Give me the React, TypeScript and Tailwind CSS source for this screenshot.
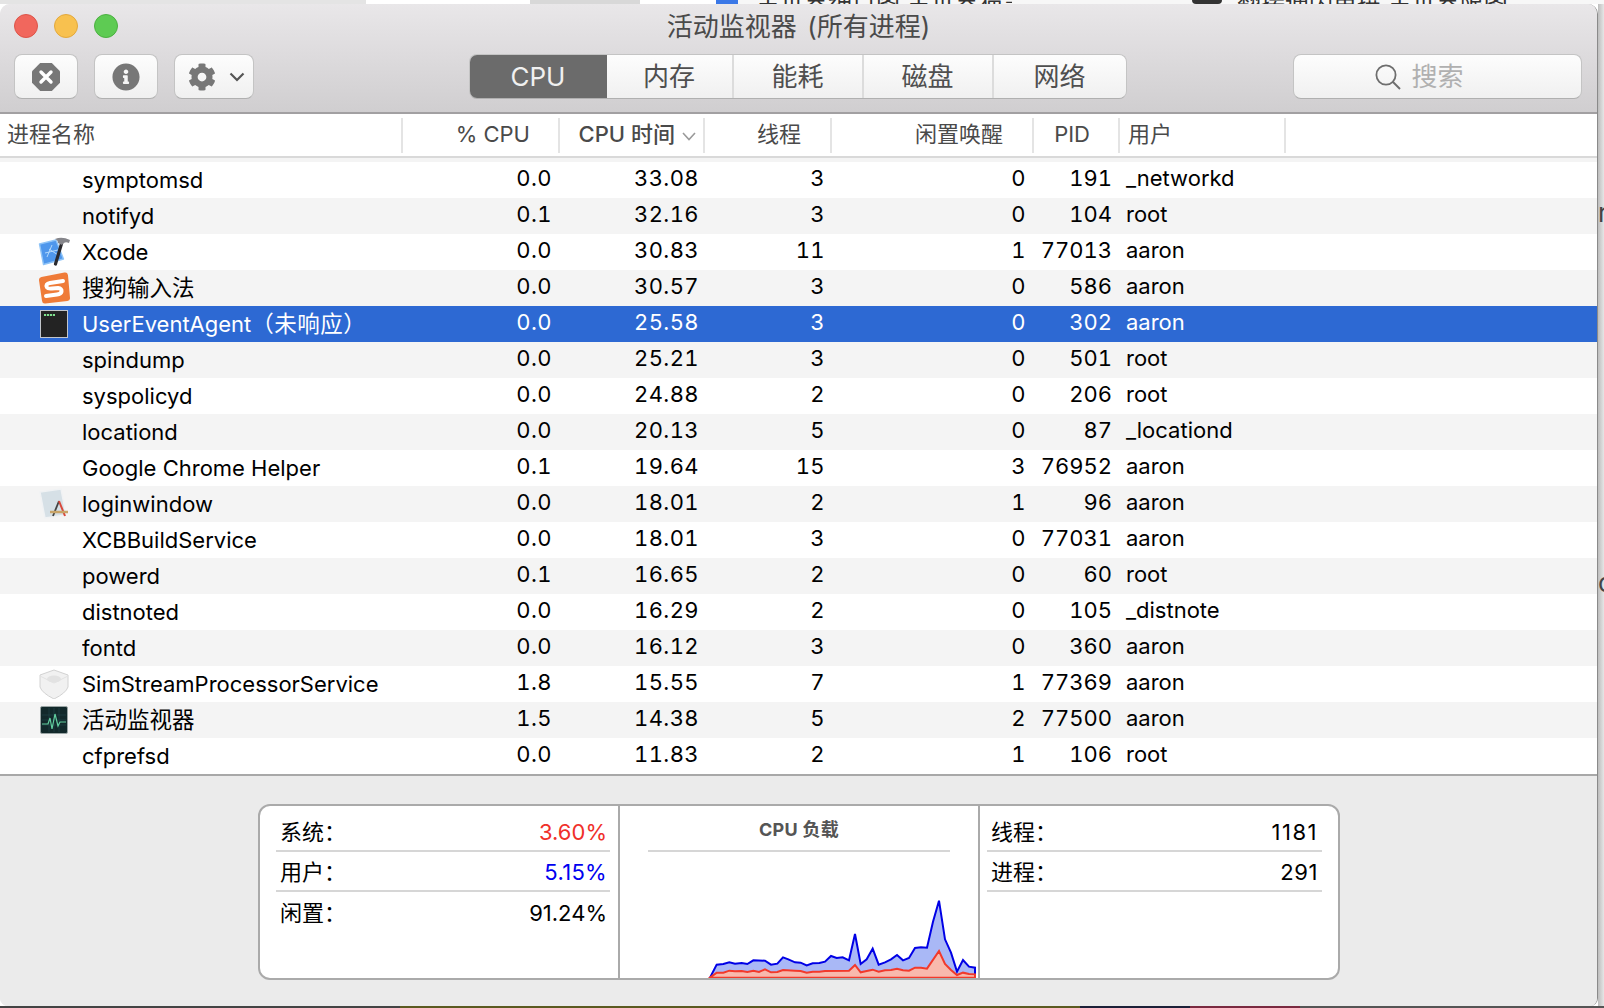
import React from "react";
import { FaCog, FaInfoCircle } from "react-icons/fa";

type Row = { name: string; cjk?: string; cpu: string; time: string; thr: string; idle: string; pid: string; user: string; icon?: string; sel?: boolean };

const rows: Row[] = [
  { name: "symptomsd", cpu: "0.0", time: "33.08", thr: "3", idle: "0", pid: "191", user: "_networkd" },
  { name: "notifyd", cpu: "0.1", time: "32.16", thr: "3", idle: "0", pid: "104", user: "root" },
  { name: "Xcode", cpu: "0.0", time: "30.83", thr: "11", idle: "1", pid: "77013", user: "aaron", icon: "xcode" },
  { name: "", cjk: "搜狗输入法", cpu: "0.0", time: "30.57", thr: "3", idle: "0", pid: "586", user: "aaron", icon: "sogou" },
  { name: "UserEventAgent", cjk: "（未响应）", cpu: "0.0", time: "25.58", thr: "3", idle: "0", pid: "302", user: "aaron", icon: "term", sel: true },
  { name: "spindump", cpu: "0.0", time: "25.21", thr: "3", idle: "0", pid: "501", user: "root" },
  { name: "syspolicyd", cpu: "0.0", time: "24.88", thr: "2", idle: "0", pid: "206", user: "root" },
  { name: "locationd", cpu: "0.0", time: "20.13", thr: "5", idle: "0", pid: "87", user: "_locationd" },
  { name: "Google Chrome Helper", cpu: "0.1", time: "19.64", thr: "15", idle: "3", pid: "76952", user: "aaron" },
  { name: "loginwindow", cpu: "0.0", time: "18.01", thr: "2", idle: "1", pid: "96", user: "aaron", icon: "login" },
  { name: "XCBBuildService", cpu: "0.0", time: "18.01", thr: "3", idle: "0", pid: "77031", user: "aaron" },
  { name: "powerd", cpu: "0.1", time: "16.65", thr: "2", idle: "0", pid: "60", user: "root" },
  { name: "distnoted", cpu: "0.0", time: "16.29", thr: "2", idle: "0", pid: "105", user: "_distnote" },
  { name: "fontd", cpu: "0.0", time: "16.12", thr: "3", idle: "0", pid: "360", user: "aaron" },
  { name: "SimStreamProcessorService", cpu: "1.8", time: "15.55", thr: "7", idle: "1", pid: "77369", user: "aaron", icon: "sim" },
  { name: "", cjk: "活动监视器", cpu: "1.5", time: "14.38", thr: "5", idle: "2", pid: "77500", user: "aaron", icon: "act" },
  { name: "cfprefsd", cpu: "0.0", time: "11.83", thr: "2", idle: "1", pid: "106", user: "root" },
];

function AppIcon({ kind }: { kind?: string }) {
  if (kind === "xcode")
    return (
      <svg viewBox="0 0 32 32" className="w-8 h-8">
        <path d="M1.5 8 L18 4 L25.5 23 L5.5 28.5 Z" fill="#4f97ec" stroke="#8fc4f7" strokeWidth="1.4" strokeLinejoin="round" />
        <path d="M9 21 L14 9 M11 13 L20 19 M7 17 L20 14" stroke="#bcdffc" strokeWidth="0.9" fill="none" />
        <path d="M24 6 L17.5 28" stroke="#2a2a2e" strokeWidth="3.2" strokeLinecap="round" />
        <path d="M17 3 Q24 0 32 4 L31 7 Q26 5 24 9 L20 7 Q20 4 17 3 Z" fill="#85858a" />
      </svg>
    );
  if (kind === "sogou")
    return (
      <svg viewBox="0 0 32 32" className="w-8 h-8">
        <path d="M4 8 L27 3.5 L29 26 L7 28.5 Z" fill="#ef7b38" stroke="#ef7b38" strokeWidth="6" strokeLinejoin="round" />
        <path d="M25 9 L12 11 Q7 12 9 15.5 Q10 17 14 16.5 L20 16 Q24 16.5 23.5 19.5 Q23 22 19 22.5 L8 24" stroke="#fff" strokeWidth="4" fill="none" strokeLinecap="round" />
      </svg>
    );
  if (kind === "term")
    return (
      <svg viewBox="0 0 28 28" className="w-7 h-7">
        <rect x="0.5" y="0.5" width="27" height="27" fill="#232323" stroke="#c2c6cc" strokeWidth="1" />
        <path d="M4 5 H15" stroke="#7fe08f" strokeWidth="1.8" strokeDasharray="2.2 0.8" />
      </svg>
    );
  if (kind === "login")
    return (
      <svg viewBox="0 0 30 32" className="w-[30px] h-8">
        <path d="M1 4 L22 1 L27 27 L6 30 Z" fill="#d6e0e6" stroke="#f0f2f4" strokeWidth="1.4" />
        <path d="M14 28 L20 13" stroke="#444" strokeWidth="1.8" fill="none" />
        <path d="M20 13 L26 28" stroke="#d9483b" strokeWidth="2" />
        <path d="M11 24 H29" stroke="#c9a468" strokeWidth="2.5" />
      </svg>
    );
  if (kind === "sim")
    return (
      <svg viewBox="0 0 30 30" className="w-[30px] h-[30px]">
        <path d="M15 1 L29 6 V18 Q27 24 15 30 Q3 24 1 18 V6 Z" fill="#f1f1f1" stroke="#d2d2d2" strokeWidth="1" />
        <ellipse cx="15" cy="10" rx="7" ry="3.5" fill="#e2e2e2" />
        <path d="M1 7 L15 14 L29 7" stroke="#e2e2e2" fill="none" />
      </svg>
    );
  if (kind === "act")
    return (
      <svg viewBox="0 0 28 28" className="w-7 h-7">
        <rect x="0.5" y="0.5" width="27" height="27" rx="1.5" fill="#12292b" stroke="#9aa5a5" strokeWidth="1" />
        <path d="M2 9 H26 M2 14 H26 M2 19 H26 M9 2 V26 M14 2 V26 M19 2 V26" stroke="#24474a" strokeWidth="0.6" />
        <path d="M2 18 H8 L10 12 L12 23 L15 8 L18 20 L20 16 H26" stroke="#62d0a0" strokeWidth="1.2" fill="none" />
      </svg>
    );
  return null;
}

function TableRow({ r, i }: { r: Row; i: number }) {
  const bg = r.sel ? "bg-[#2d69d3] text-white" : i % 2 === 0 ? "bg-white text-black" : "bg-[#f4f4f4] text-black";
  return (
    <div className={`flex h-9 items-center text-[22px] leading-[36px] ${bg}`}>
      <div className="w-[82px] h-9 flex items-center justify-center pl-[26px] shrink-0">
        <AppIcon kind={r.icon} />
      </div>
      <div className="w-[320px] shrink-0 whitespace-nowrap overflow-hidden">
        {r.name}
        {r.cjk && <span className={`text-[22.5px] ${r.name ? "tracking-[0.5px]" : ""}`}>{r.cjk}</span>}
      </div>
      <div className="w-[150px] shrink-0 text-right tabular-nums tracking-[0.4px] pb-[4px]">{r.cpu}</div>
      <div className="w-[147px] shrink-0 text-right tabular-nums tracking-[0.4px] pb-[4px]">{r.time}</div>
      <div className="w-[126px] shrink-0 text-right tabular-nums tracking-[0.4px] pb-[4px]">{r.thr}</div>
      <div className="w-[201px] shrink-0 text-right tabular-nums tracking-[0.4px] pb-[4px]">{r.idle}</div>
      <div className="w-[86px] shrink-0 text-right tabular-nums pb-[4px]">{r.pid}</div>
      <div className="pl-[14px] pb-[4px] whitespace-nowrap">{r.user}</div>
    </div>
  );
}

function HeadCell({ w, children, align = "right", pad = "" }: { w: string; children: React.ReactNode; align?: string; pad?: string }) {
  return (
    <div className={`${w} shrink-0 h-[35px] border-r-2 border-[#e4e4e4] flex items-center pb-[2px] ${align === "right" ? "justify-end" : "justify-start"} ${pad}`}>
      {children}
    </div>
  );
}

function StatRow({ label, value, color = "text-black", line = true, valueClass = "" }: { label: string; value: string; color?: string; line?: boolean; valueClass?: string }) {
  return (
    <div className={`h-10 flex items-center justify-between pl-[4px] pr-[2px] pt-[2px] ${line ? "border-b-2 border-[#d6d6d6]" : ""}`}>
      <span className="text-[22px] text-black">{label}</span>
      <span className={`text-[22px] ${color} ${valueClass}`}>{value}</span>
    </div>
  );
}

const blue = "60,293 80,254 100,252 118,247 135,251 155,249 172,252 190,241 225,242 243,254 262,251 279,232 295,238 315,247 332,248 350,256 368,250 388,249 405,245 423,228 440,234 458,232 477,241 495,162 512,252 530,238 548,206 566,254 585,247 603,238 621,225 639,241 657,234 675,204 693,202 711,203 729,125 747,62 765,178 783,218 801,275 819,240 837,260 855,263 855,293";
const red = "60,293 80,278 100,278 118,272 135,274 155,273 172,276 190,272 207,276 225,268 243,277 262,276 279,270 315,272 332,273 350,278 368,275 388,275 405,273 477,272 495,255 512,277 530,273 548,269 566,275 585,271 603,270 621,266 639,271 657,272 675,263 693,263 711,266 747,213 765,252 783,270 801,285 819,278 837,282 855,283 855,293";

export default function App() {
  const btn = "h-[45px] rounded-[8px] border border-[#c4c4c4] border-b-[#b0b0b0] bg-gradient-to-b from-[#fdfdfd] to-[#f0f0f0] flex items-center justify-center";
  return (
    <div
      className="w-[1604px] h-[1008px] overflow-hidden flex flex-col bg-white"
      style={{ fontFamily: 'Inter, "Noto Sans CJK SC", sans-serif' }}
    >
      {/* what lies behind the window, top */}
      <div className="h-1 shrink-0 flex overflow-hidden bg-[#f7f7f7]">
        <div className="w-[366px] h-1 bg-[#e4e4e4]" />
        <div className="w-[164px] h-1 bg-white" />
        <div className="w-[110px] h-1 bg-[#d8d8d8]" />
        <div className="w-[76px] h-1 bg-white" />
        <div className="w-[22px] h-1 bg-[#3b78e7]" />
        <div className="w-[18px]" />
        <div className="w-[256px] h-1 text-[#333] text-[24px] leading-[6px] whitespace-nowrap overflow-hidden">主世界细目图 主世界猫事</div>
        <div className="w-[180px]" />
        <div className="w-[30px] h-1 bg-[#333] rounded-b-full" />
        <div className="w-[15px]" />
        <div className="w-[300px] h-1 text-[#333] text-[24px] leading-[6px] whitespace-nowrap overflow-hidden">翻接通因单撰 主世界限图</div>
      </div>

      <div className="flex flex-1 min-h-0">
        {/* window */}
        <div className="w-[1598px] shrink-0 flex flex-col rounded-t-[10px] rounded-b-[8px] overflow-hidden border-r border-[#8a8a8a] bg-[#ebebeb]">
          {/* title bar */}
          <div className="h-[110px] shrink-0 bg-gradient-to-b from-[#e9e7e9] to-[#d0ced0] border-b-2 border-[#a2a0a2] flex flex-col">
            <div className="h-[46px] grid grid-cols-[1fr_auto_1fr] items-center">
              <div className="flex gap-4 pl-[14px] pb-[3px]">
                <div className="w-6 h-6 rounded-full bg-[#f1675d] border border-[#dc5449]" />
                <div className="w-6 h-6 rounded-full bg-[#f8c14f] border border-[#e2a83c]" />
                <div className="w-6 h-6 rounded-full bg-[#5ecb53] border border-[#4bb040]" />
              </div>
              <div className="text-[26px] text-[#4a4a4a] leading-none pb-[1px] whitespace-nowrap [word-spacing:3px]">活动监视器 (所有进程)</div>
              <div />
            </div>
            <div className="grid grid-cols-[1fr_auto_1fr] items-start h-[45px] mt-[4px] pr-[2px]">
              <div className="flex gap-4 pl-[14px]">
                <div className={`${btn} w-[64px]`}>
                  <svg viewBox="0 0 28 28" className="w-7 h-7">
                    <path d="M8.2 0 H19.8 L28 8.2 V19.8 L19.8 28 H8.2 L0 19.8 V8.2 Z" fill="#777" />
                    <path d="M9 9 L19 19 M19 9 L9 19" stroke="#fff" strokeWidth="3.4" strokeLinecap="round" />
                  </svg>
                </div>
                <div className={`${btn} w-[64px]`}>
                  <FaInfoCircle className="w-7 h-7 text-[#777]" />
                </div>
                <div className={`${btn} w-[80px] gap-[13px] pl-[5px]`}>
                  <FaCog className="w-7 h-7 text-[#777]" />
                  <svg viewBox="0 0 16 10" className="w-4 h-[10px]">
                    <path d="M1.5 1.5 L8 8 L14.5 1.5" stroke="#555" strokeWidth="2.2" fill="none" />
                  </svg>
                </div>
              </div>
              <div className="flex h-[45px] rounded-[8px] overflow-hidden border border-[#c4c4c4] border-b-[#b0b0b0] text-[26px] leading-none">
                <div className="w-[137px] bg-[#6b6b6b] text-[#f0f0f0] flex items-center justify-center">CPU</div>
                {["内存", "能耗", "磁盘", "网络"].map((t, i) => (
                  <div
                    key={t}
                    className={`${i === 0 ? "w-[127px]" : i === 3 ? "w-[132px]" : "w-[130px]"} bg-gradient-to-b from-[#fdfdfd] to-[#f0f0f0] text-[#4f4f4f] flex items-center justify-center ${i < 3 ? "border-r-2 border-[#dcdcdc]" : ""}`}
                  >
                    {t}
                  </div>
                ))}
              </div>
              <div className="flex justify-end pr-[13px]">
                <div className={`${btn} w-[289px] gap-[10px] pr-[36px]`}>
                  <svg viewBox="0 0 26 26" className="w-[26px] h-[26px]">
                    <circle cx="11" cy="11" r="9.6" stroke="#6e6e6e" strokeWidth="1.8" fill="none" />
                    <path d="M18 18 L25 25" stroke="#6e6e6e" strokeWidth="2" />
                  </svg>
                  <span className="text-[26px] text-[#b0b0b0] leading-none">搜索</span>
                </div>
              </div>
            </div>
          </div>

          {/* table head */}
          <div className="h-[44px] shrink-0 bg-white border-b-2 border-[#d9d9d9] flex items-center text-[22px] text-[#4a4a4a]">
            <HeadCell w="w-[403px]" align="left" pad="pl-[7px]">进程名称</HeadCell>
            <HeadCell w="w-[157px]" pad="pr-[28px]">% CPU</HeadCell>
            <HeadCell w="w-[145px]" pad="pr-[7px]">
              <span className="mr-[7px] font-medium">CPU 时间</span>
              <svg viewBox="0 0 14 9" className="w-[14px] h-[9px] mt-[4px]">
                <path d="M1 1 L7 7.5 L13 1" stroke="#9a9a9a" strokeWidth="1.6" fill="none" />
              </svg>
            </HeadCell>
            <HeadCell w="w-[127px]" pad="pr-[29px]">线程</HeadCell>
            <HeadCell w="w-[202px]" pad="pr-[29px]">闲置唤醒</HeadCell>
            <HeadCell w="w-[86px]" pad="pr-[28px]">PID</HeadCell>
            <HeadCell w="w-[166px]" align="left" pad="pl-[8px]">用户</HeadCell>
          </div>

          {/* table body */}
          <div className="h-1 shrink-0 bg-[#f4f4f4]" />
          <div className="shrink-0 flex flex-col">
            {rows.map((r, i) => (
              <TableRow key={r.pid} r={r} i={i} />
            ))}
          </div>

          {/* bottom panel */}
          <div className="flex-1 min-h-0 border-t-2 border-[#a8a8a8] bg-[#ebebeb] pt-[28px] pl-[258px]">
            <div className="w-[1082px] h-[176px] bg-white border-2 border-[#aaaaaa] rounded-[12px] flex overflow-hidden">
              <div className="w-[360px] shrink-0 border-r-2 border-[#aaaaaa] pl-4 pr-2 pt-[6px]">
                <StatRow label="系统：" value="3.60%" color="text-[#f0302a]" valueClass="mr-[1px]" />
                <StatRow label="用户：" value="5.15%" color="text-[#0000f0]" valueClass="mr-[1px] tracking-[0.3px]" />
                <StatRow label="闲置：" value="91.24%" line={false} valueClass="mr-[1px]" />
              </div>
              <div className="w-[358px] shrink-0 flex flex-col items-center">
                <div className="w-[302px] h-[46px] border-b-2 border-[#d6d6d6] text-center text-[18px] font-bold tracking-[0.3px] text-[#555] leading-[47px]">CPU 负载</div>
                <svg viewBox="0 0 864 294" className="w-[288px] h-[98px] mt-auto self-end shrink-0">
                  <polygon points={blue} fill="#a9b8f6" stroke="#0000e6" strokeWidth="6" />
                  <polygon points={red} fill="#f8b9ad" stroke="#f2392b" strokeWidth="6" />
                </svg>
              </div>
              <div className="flex-1 border-l-2 border-[#aaaaaa] pl-[7px] pr-4 pt-[6px]">
                <StatRow label="线程：" value="1181" valueClass="mr-[2px] tracking-[1.5px]" />
                <StatRow label="进程：" value="291" valueClass="mr-[2px] tracking-[0.6px]" />
              </div>
            </div>
          </div>
        </div>

        {/* what lies behind the window, right */}
        <div className="w-[6px] shrink-0 bg-gradient-to-r from-[#bdbdbd] to-[#e6e6e6] overflow-hidden flex flex-col text-[26px] leading-none text-[#444]">
          <div className="h-[196px]" />
          <div className="h-[30px]">r</div>
          <div className="h-[340px]" />
          <div className="h-[30px]">c</div>
        </div>
      </div>

      {/* what lies behind the window, bottom */}
      <div className="h-[2px] shrink-0 flex">
        <div className="w-[400px] bg-[#444]" />
        <div className="w-[680px] bg-[#5b5a20]" />
        <div className="w-[110px] bg-[#1c2038]" />
        <div className="w-[110px] bg-[#7a2a40]" />
        <div className="flex-1 bg-[#555]" />
      </div>
    </div>
  );
}
